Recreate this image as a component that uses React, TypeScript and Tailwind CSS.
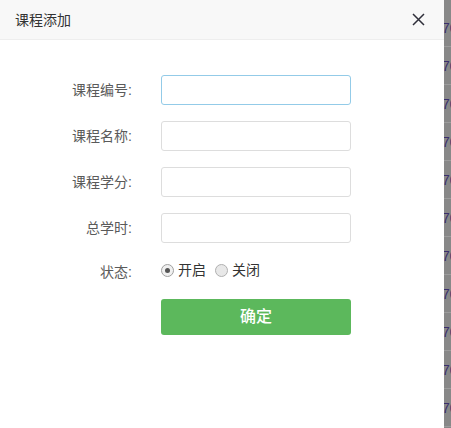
import React from "react";

const fields = ["课程编号:", "课程名称:", "课程学分:", "总学时:"];

const stripRows = Array.from({ length: 11 });

const App = () => {
  return (
    <div
      className="flex w-[451px] h-[428px] overflow-hidden"
      style={{ fontFamily: '"Liberation Sans", "Noto Sans CJK SC", sans-serif' }}
    >
      <div className="w-[444px] h-full bg-white flex flex-col shrink-0">
        <div className="h-[40px] bg-[#f8f8f8] border-b border-[#eeeeee] flex items-center justify-between pl-[15px] pr-[19px]">
          <span className="text-[14px] text-[#333] leading-none">课程添加</span>
          <svg width="13" height="13" viewBox="0 0 13 13">
            <path d="M1 1 L12 12 M12 1 L1 12" stroke="#2f2f3a" strokeWidth="1.5" />
          </svg>
        </div>

        <div className="flex flex-col pt-[35px]">
          {fields.map((label, i) => (
            <div key={label} className="flex items-center h-[30px] mb-[16px]">
              <div className="w-[132px] text-right text-[14px] text-[#5a5a5a]">{label}</div>
              <input
                className={
                  "ml-[29px] w-[190px] h-[30px] rounded-[3px] border bg-white outline-none " +
                  (i === 0 ? "border-[#93cbe8]" : "border-[#dddddd]")
                }
              />
            </div>
          ))}

          <div className="flex items-center h-[20px] mt-[1px]">
            <div className="w-[132px] text-right text-[14px] text-[#5a5a5a] mt-[4px]">状态:</div>
            <div className="ml-[29px] flex items-center text-[14px] text-[#333]">
              <span className="w-[13px] h-[13px] rounded-full border border-[#a0a0a0] bg-[#f0f0f0] flex items-center justify-center">
                <span className="w-[5px] h-[5px] rounded-full bg-[#555]" />
              </span>
              <span className="ml-[4px]">开启</span>
              <span className="ml-[9px] w-[13px] h-[13px] rounded-full border border-[#b0b0b0] bg-[#e8e8e8]" />
              <span className="ml-[4px]">关闭</span>
            </div>
          </div>

          <div className="flex mt-[19px]">
            <button className="ml-[161px] w-[190px] h-[36px] rounded-[3px] bg-[#5cb85c] text-white text-[16px] font-medium">
              确定
            </button>
          </div>
        </div>
      </div>

      <div className="flex-1 bg-[#888888] flex flex-col pt-[9px] overflow-hidden">
        {stripRows.map((_, i) => (
          <div
            key={i}
            className="h-[38px] shrink-0 border-b border-[#9c9c9c] flex items-center text-[14px] text-[#3b2f6b] leading-none whitespace-nowrap -ml-[2px]"
          >
            70
          </div>
        ))}
      </div>
    </div>
  );
};

export default App;
